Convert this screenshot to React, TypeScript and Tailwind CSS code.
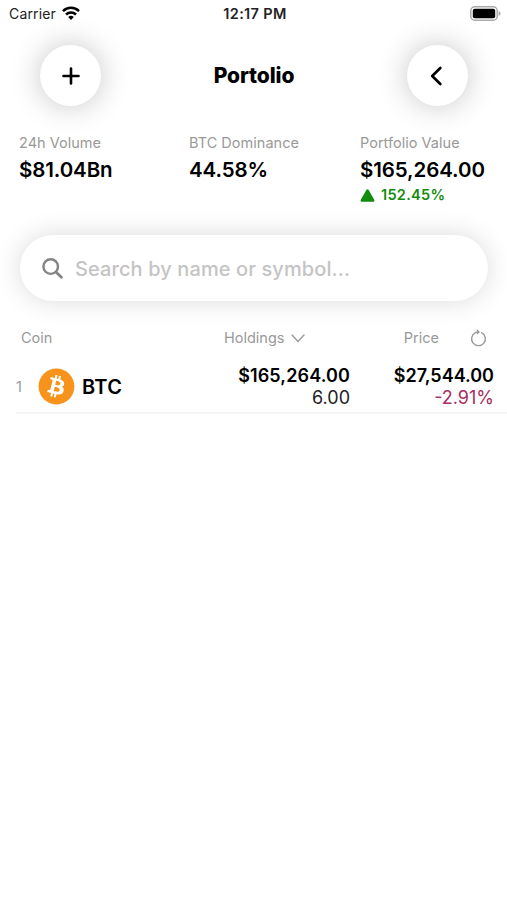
import type { ReactNode } from "react";
import { FaBitcoin } from "react-icons/fa";

function StatusBar() {
  return (
    <div className="flex h-[27px] items-center pl-[9px] pr-[6px] text-[14px] leading-[27px] text-[#222]">
      <div className="flex flex-1 items-center gap-[6px]">
        <span className="tracking-[0.15px]">Carrier</span>
        <svg width="18" height="14" viewBox="0 0 18 14" className="-mt-[2px]" fill="none" stroke="#000" strokeWidth="2.6">
          <path d="M1 5.1a11.4 11.4 0 0 1 16 0" />
          <path d="M4 8.5a7.2 7.2 0 0 1 10 0" />
          <path d="M9 13.9 6.2 11.1a4 4 0 0 1 5.6 0z" fill="#000" stroke="none" />
        </svg>
      </div>
      <span className="text-[14.5px] font-semibold tracking-[0.35px]">12:17 PM</span>
      <div className="flex flex-1 justify-end">
        <svg width="31" height="15" viewBox="0 0 31 15" className="-mt-px">
          <rect x="0.8" y="0.8" width="26.4" height="13.4" rx="4" fill="#fff" stroke="#aaa" strokeWidth="1.5" />
          <rect x="2.8" y="2.8" width="22.4" height="9.4" rx="2" fill="#000" />
          <path d="M28.6 5v5c1.3-.5 2-1.3 2-2.5s-.7-2-2-2.5z" fill="#aaa" />
        </svg>
      </div>
    </div>
  );
}

function CircleButton({ label, children }: { label: string; children: ReactNode }) {
  return (
    <button
      aria-label={label}
      className="flex size-[61px] items-center justify-center rounded-full bg-white shadow-[0_0_30px_rgba(0,0,0,0.23)]"
    >
      {children}
    </button>
  );
}

function Header() {
  return (
    <header className="mt-[18px] flex items-center justify-between pl-[40px] pr-[39px]">
      <CircleButton label="Add">
        <svg width="18" height="18" viewBox="0 0 18 18" stroke="#000" strokeWidth="2.6" strokeLinecap="round">
          <path d="M9 1.5v15M1.5 9h15" />
        </svg>
      </CircleButton>
      <h1 className="text-[21px] font-extrabold leading-6 tracking-[-0.1px]">Portolio</h1>
      <CircleButton label="Back">
        <svg
          width="12"
          height="20"
          viewBox="0 0 12 20"
          className="mr-[3px]"
          fill="none"
          stroke="#000"
          strokeWidth="2.6"
          strokeLinecap="round"
          strokeLinejoin="round"
        >
          <path d="M10.3 2 2.2 10l8.1 8" />
        </svg>
      </CircleButton>
    </header>
  );
}

function Stat({ title, value, change }: { title: string; value: string; change?: string }) {
  return (
    <div>
      <p className="text-[14.5px] leading-[20px] tracking-[0.02px] text-[#999]">{title}</p>
      <p className="mt-[4px] text-[20.5px] font-semibold leading-[26px] tracking-[-0.1px]">{value}</p>
      {change && (
        <p className="flex h-[24px] items-center gap-[6px] text-[14.5px] font-semibold tracking-[0.3px] text-[#118c0d]">
          <svg width="15" height="13" viewBox="0 0 14 13" fill="#118c0d">
            <path d="M5.8.9.3 10.7c-.6 1 0 2.1 1.2 2.1h11c1.2 0 1.8-1.1 1.2-2.1L8.2.9C7.7 0 6.3 0 5.8.9z" />
          </svg>
          {change}
        </p>
      )}
    </div>
  );
}

function SearchBar() {
  return (
    <div className="ml-[20px] mr-[19px] mt-[27px] flex h-[66px] items-center rounded-full bg-white pl-[22px] shadow-[0_0_26px_rgba(0,0,0,0.15)]">
      <svg width="21" height="21" viewBox="0 0 21 21" fill="none" stroke="#848484" strokeLinecap="round">
        <circle cx="8.7" cy="8.6" r="7.3" strokeWidth="2.4" />
        <path d="m14.2 14.2 5.2 5" strokeWidth="2.8" />
      </svg>
      <span className="ml-[12px] mt-px text-[20px] font-medium tracking-[0.1px] text-[#c4c4c4]">
        Search by name or symbol...
      </span>
    </div>
  );
}

function ColumnTitles() {
  return (
    <div className="mt-[27px] flex h-[20px] items-center pl-[21px] pr-[20px] text-[14.5px] leading-[20px] text-[#999]">
      <span className="w-[203px]">Coin</span>
      <span className="flex flex-1 items-center gap-[6px]">
        Holdings
        <svg width="14" height="9" viewBox="0 0 14 9" fill="none" stroke="#999" strokeWidth="1.4" strokeLinecap="round">
          <path d="m1 1 6 6.5L13 1" />
        </svg>
      </span>
      <span>Price</span>
      <svg
        width="17"
        height="18"
        viewBox="0 0 17 18"
        className="ml-[31px]"
        fill="none"
        stroke="#999"
        strokeWidth="1.4"
        strokeLinecap="round"
        strokeLinejoin="round"
      >
        <path d="M11.6 3.6A6.9 6.9 0 1 1 5.4 3.6M5.4 3.6Q7 2.7 9 2.9M7.3 1.2 9 2.9 7.4 4.4" />
      </svg>
    </div>
  );
}

function CoinRow() {
  return (
    <div className="ml-[16px] mt-[16px] flex h-[50px] items-center border-b-2 border-[#f5f5f5] pb-[3px] pr-[13px]">
      <span className="w-[22px] text-[14.5px] text-[#999]">1</span>
      <span className="flex size-[36px] items-center justify-center rounded-full bg-white">
        <FaBitcoin size={37} color="#f7931a" className="shrink-0" />
      </span>
      <span className="ml-[8px] text-[20px] font-semibold tracking-[0.25px]">BTC</span>
      <div className="flex-1 text-right text-[18px] leading-[22px]">
        <p className="font-semibold tracking-[0.12px]">$165,264.00</p>
        <p className="text-[#222]">6.00</p>
      </div>
      <div className="w-[144px] text-right text-[18px] leading-[22px]">
        <p className="font-semibold">$27,544.00</p>
        <p className="text-[#a82d61]">-2.91%</p>
      </div>
    </div>
  );
}

export default function App() {
  return (
    <main className="h-screen w-full overflow-hidden bg-white font-['Inter',sans-serif] text-black">
      <StatusBar />
      <Header />
      <section className="mt-[27px] grid h-[75px] grid-cols-[170px_171px_1fr] pl-[19px]">
        <Stat title="24h Volume" value="$81.04Bn" />
        <Stat title="BTC Dominance" value="44.58%" />
        <Stat title="Portfolio Value" value="$165,264.00" change="152.45%" />
      </section>
      <SearchBar />
      <ColumnTitles />
      <CoinRow />
    </main>
  );
}
